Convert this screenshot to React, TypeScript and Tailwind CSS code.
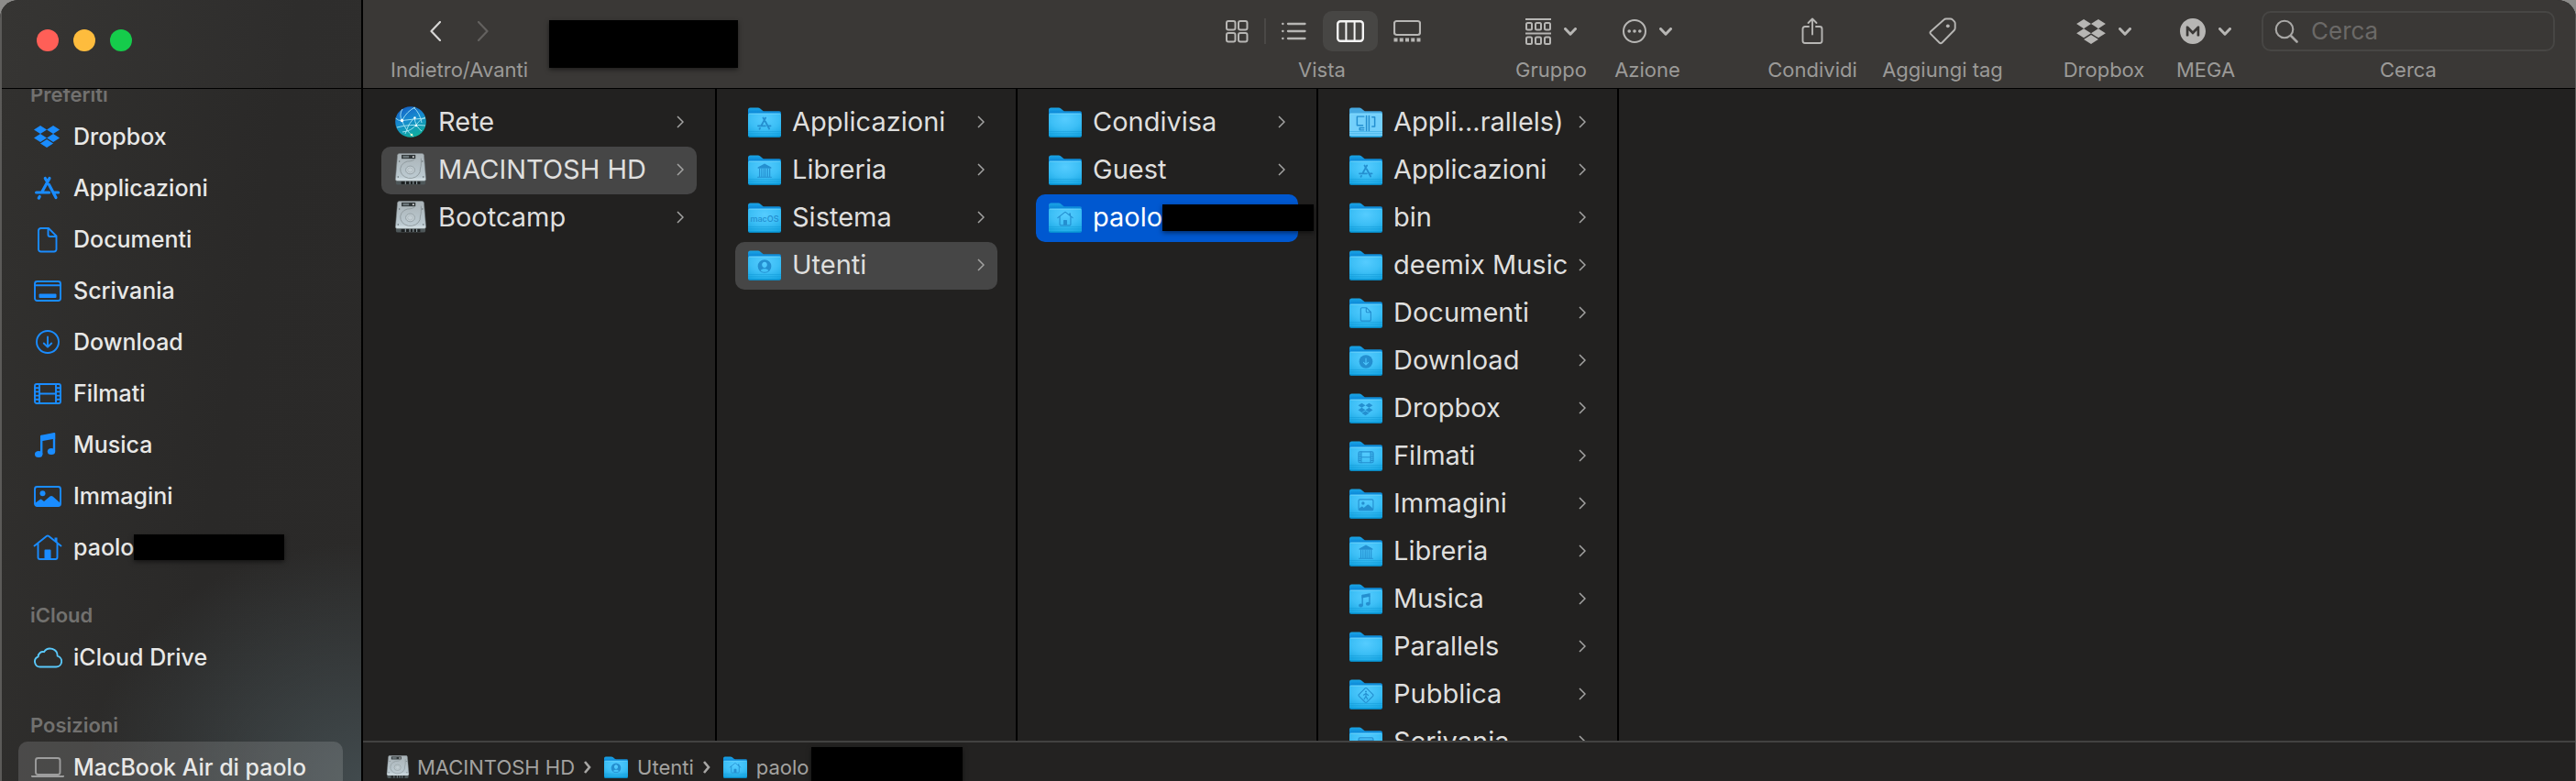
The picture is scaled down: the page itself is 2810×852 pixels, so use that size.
import { useState } from 'react';
import type { ReactNode } from 'react';
import clsx from 'clsx';
import { SiMega } from 'react-icons/si';

type GlyphName =
  | 'dropbox' | 'apps' | 'document' | 'desktop' | 'download' | 'film' | 'music' | 'image' | 'home'
  | 'library' | 'user' | 'public' | 'parallels' | 'macos';

type Entry = { name: string; icon: 'network' | 'disk' | 'folder'; glyph?: GlyphName; hidden?: boolean; light?: boolean };

const favorites: { name: string; glyph: GlyphName; hidden?: boolean }[] = [
  { name: 'Dropbox', glyph: 'dropbox' },
  { name: 'Applicazioni', glyph: 'apps' },
  { name: 'Documenti', glyph: 'document' },
  { name: 'Scrivania', glyph: 'desktop' },
  { name: 'Download', glyph: 'download' },
  { name: 'Filmati', glyph: 'film' },
  { name: 'Musica', glyph: 'music' },
  { name: 'Immagini', glyph: 'image' },
  { name: 'paolo', glyph: 'home', hidden: true },
];

const columns: { selected?: string; entries: Entry[] }[] = [
  {
    selected: 'MACINTOSH HD',
    entries: [
      { name: 'Rete', icon: 'network' },
      { name: 'MACINTOSH HD', icon: 'disk' },
      { name: 'Bootcamp', icon: 'disk' },
    ],
  },
  {
    selected: 'Utenti',
    entries: [
      { name: 'Applicazioni', icon: 'folder', glyph: 'apps' },
      { name: 'Libreria', icon: 'folder', glyph: 'library' },
      { name: 'Sistema', icon: 'folder', glyph: 'macos' },
      { name: 'Utenti', icon: 'folder', glyph: 'user' },
    ],
  },
  {
    selected: 'paolo',
    entries: [
      { name: 'Condivisa', icon: 'folder' },
      { name: 'Guest', icon: 'folder' },
      { name: 'paolo', icon: 'folder', glyph: 'home', hidden: true },
    ],
  },
  {
    entries: [
      { name: 'Appli...rallels)', icon: 'folder', glyph: 'parallels', light: true },
      { name: 'Applicazioni', icon: 'folder', glyph: 'apps' },
      { name: 'bin', icon: 'folder' },
      { name: 'deemix Music', icon: 'folder' },
      { name: 'Documenti', icon: 'folder', glyph: 'document' },
      { name: 'Download', icon: 'folder', glyph: 'download' },
      { name: 'Dropbox', icon: 'folder', glyph: 'dropbox' },
      { name: 'Filmati', icon: 'folder', glyph: 'film' },
      { name: 'Immagini', icon: 'folder', glyph: 'image' },
      { name: 'Libreria', icon: 'folder', glyph: 'library' },
      { name: 'Musica', icon: 'folder', glyph: 'music' },
      { name: 'Parallels', icon: 'folder' },
      { name: 'Pubblica', icon: 'folder', glyph: 'public' },
      { name: 'Scrivania', icon: 'folder', glyph: 'desktop' },
    ],
  },
];

const dropboxPath =
  'M6 1.8L0 5.63l6 3.82 6-3.82zM18 1.8l-6 3.83 6 3.82 6-3.82zM0 13.27l6 3.83 6-3.83-6-3.82zM18 9.45l-6 3.82 6 3.83 6-3.83zM6 18.37l6 3.82 6-3.82-6-3.82z';

// all glyphs live on a 30x30 grid and take the current colour
const glyphs: Record<GlyphName, ReactNode> = {
  dropbox: <path d={dropboxPath} transform="translate(0 1) scale(1.17)" fill="currentColor" stroke="none" />,
  apps: <path d="M17 4.5L9 19M12.3 4.5l1.2 2.2M16.5 11.5L24 25.5M2.6 20h14M22 20h4.6M6.2 24.5l-.9 1.6" strokeWidth="3.2" />,
  document: <path d="M7.5 3H16l8.5 8.5V26a2.5 2.5 0 0 1-2.5 2.5H7.5A2.5 2.5 0 0 1 5 26V5.500A2.5 2.5 0 0 1 7.5 3zM15.5 3.5V10a2 2 0 0 0 2 2H24" />,
  desktop: (
    <>
      <rect x="1" y="5" width="28" height="21" rx="2.5" />
      <path d="M1 9.2h28" />
      <rect x="5.5" y="18.5" width="19" height="4.5" rx="1" fill="currentColor" stroke="none" />
    </>
  ),
  download: (
    <>
      <circle cx="15" cy="15" r="12" />
      <path d="M15 9.5v11M10.8 16.5l4.2 4.2 4.2-4.2" />
    </>
  ),
  film: (
    <>
      <rect x="1" y="5" width="28" height="21" rx="2" />
      <path d="M6 5v21M24 5v21M6 15.5h18M1 9.2h5M1 13.4h5M1 17.6h5M1 21.8h5M24 9.2h5M24 13.4h5M24 17.6h5M24 21.8h5" />
    </>
  ),
  music: (
    <>
      <path d="M8.2 25V6M22 22V8" strokeWidth="2.4" />
      <path d="M7 6.2q0-1.2 1.2-1.5L22 2q1.3-.2 1.3 1v5.5L7 11.5z" fill="currentColor" stroke="none" />
      <ellipse cx="5.2" cy="25.5" rx="4.2" ry="3.5" fill="currentColor" stroke="none" />
      <ellipse cx="19" cy="22.5" rx="4.2" ry="3.5" fill="currentColor" stroke="none" />
    </>
  ),
  image: (
    <>
      <rect x="1" y="5" width="28" height="21" rx="2.5" />
      <circle cx="9.500" cy="12.3" r="3" fill="currentColor" stroke="none" />
      <path d="M1 23l5.5-4q1-.8 2 0l2.5 2 6.5-5.5q1.5-1.2 3 0L29 23v1q0 2-2 2H3q-2 0-2-2z" fill="currentColor" stroke="none" />
    </>
  ),
  home: (
    <>
      <path d="M.5 13.500L14 2.800q1-.8 2 0l13.5 10.7M4.500 11v15a2 2 0 0 0 2 2h17a2 2 0 0 0 2-2V11" />
      <path d="M11.5 28v-9.500q0-1 1-1h5q1 0 1 1V28zM22.5 4.500h3v6l-3-2.400z" fill="currentColor" stroke="none" />
    </>
  ),
  library: (
    <>
      <path d="M15 1l13 7v2H2V8z" fill="currentColor" stroke="none" />
      <path d="M5.5 11v14M9.5 11v14M13.5 11v14M17 11v14M21 11v14M25 11v14M2 27h26" />
    </>
  ),
  user: (
    <path
      fillRule="evenodd"
      stroke="none"
      fill="currentColor"
      d="M15 2a13 13 0 1 0 0 26 13 13 0 1 0 0-26zM15 6.500c3 0 5 2.500 5 5.500s-2 6-5 6-5-3-5-6 2-5.500 5-5.500zM7.5 23.500c1-2.500 4.500-3.500 7.500-3.500s6.500 1 7.500 3.500c-2 1.800-4.500 2.700-7.500 2.700s-5.500-.9-7.500-2.700z"
    />
  ),
  public: (
    <>
      <path d="M13.5 1.500q1.5-1.2 3 0l12 12q1.200 1.500 0 3l-12 12q-1.500 1.200-3 0l-12-12q-1.200-1.500 0-3z" />
      <circle cx="15" cy="8" r="1.800" fill="currentColor" stroke="none" />
      <path d="M15 11v6l3 5.500M15 17l-3.500 5.500M10.500 14.500l4.500-3 4.500 3.500" />
    </>
  ),
  parallels: <path d="M11 2H-2v17H9M11 24H3v4h8M16 1v28M21 1v28M27 3h5v18h-5" strokeWidth="2.6" />,
  macos: (
    <text x="15" y="21" textAnchor="middle" fontSize="16" fontWeight="500" fill="currentColor" stroke="none">
      macOS
    </text>
  ),
};

function Glyph({ name, className }: { name: GlyphName; className?: string }) {
  return (
    <svg viewBox="0 0 30 30" width="30" height="30" fill="none" stroke="currentColor" strokeWidth="1.9"
      strokeLinecap="round" strokeLinejoin="round" className={clsx('shrink-0 overflow-visible', className)}>
      {glyphs[name]}
    </svg>
  );
}

function FolderIcon({ glyph, light, className }: { glyph?: GlyphName; light?: boolean; className?: string }) {
  return (
    <svg viewBox="0 0 36 33" className={clsx('shrink-0', className)}>
      <defs>
        <linearGradient id="folder-back" x1="0" y1="0" x2="0" y2="1">
          <stop offset="0" stopColor="#1aa6e6" />
          <stop offset=".25" stopColor="#0a84d6" />
        </linearGradient>
        <radialGradient id="folder-front" cx=".5" cy=".25" r=".85">
          <stop offset="0" stopColor="#55ccff" />
          <stop offset=".5" stopColor="#3dbff6" />
          <stop offset="1" stopColor="#15a5e2" />
        </radialGradient>
      </defs>
      <path d="M0 3q0-2.5 2.5-2.5h8.3q1.4 0 2.5.9l2.4 2q1 .9 2.4.9H34q2 0 2 2V26H0z" fill={light ? '#45a8e0' : 'url(#folder-back)'} />
      <path d="M0 8q0-1.500 1.500-1.500h33Q36 6.500 36 8v22.500q0 2-2 2H2q-2 0-2-2z" fill={light ? '#74d0fb' : 'url(#folder-front)'} />
      <path d="M1 7.2h34" stroke="#8be0ff" strokeWidth=".8" opacity=".7" />
      <path d="M0 26.500h36M0 28.800h36" stroke="#0d93d2" strokeWidth=".7" opacity=".55" />
      <path d="M.5 31.500q.7.600 1.500.6h32q.8 0 1.500-.6" fill="none" stroke="#0590cf" strokeWidth="1.4" />
      {glyph && (
        <svg x="9.500" y="9" width="17" height="17" viewBox="0 0 30 30" fill="none" stroke="currentColor" strokeWidth="2"
          strokeLinecap="round" strokeLinejoin="round" overflow="visible" className="text-[#248fd0]">
          {glyph === 'download' ? (
            <>
              <circle cx="15" cy="15" r="13" fill="currentColor" stroke="none" />
              <path d="M15 9v12M10.500 16.500L15 21l4.500-4.500" stroke="#4cc6fb" />
            </>
          ) : (
            glyphs[glyph]
          )}
        </svg>
      )}
    </svg>
  );
}

function DiskIcon({ className }: { className?: string }) {
  return (
    <svg viewBox="-1 0 38 38" className={clsx('shrink-0', className)}>
      <defs>
        <linearGradient id="disk-body" x1="0" y1="0" x2="0" y2="1">
          <stop offset="0" stopColor="#a9b2b6" />
          <stop offset=".85" stopColor="#bccad1" />
          <stop offset="1" stopColor="#dbe6ea" />
        </linearGradient>
      </defs>
      <path d="M1 30h34v4.500q0 2-2 2H3q-2 0-2-2z" fill="#4e5759" />
      <path d="M7 32.500h22v3.500H7z" fill="#1d2122" />
      <path d="M12 32v4M17 32v4M21 32v4M25 32v4" stroke="#8b979b" strokeWidth="1.2" />
      <path d="M5 .5h26q2 0 2.200 2L35.500 30q0 2-2 2h-31q-2 0-2-2L2.800 2.500Q3 .5 5 .5z" fill="url(#disk-body)" stroke="#7d878b" strokeWidth=".6" />
      <path d="M7.500 2h16v4.500h-16z" fill="#303638" />
      <path d="M9 3h7v2.500H9z" fill="#6d777b" />
      <circle cx="21" cy="4.300" r="1" fill="#fff" />
      <path d="M30 6v6q0 3-1 6a11.500 10 0 1 1-15-8.500Q21 9.500 23 6.500" fill="none" stroke="#8a9498" strokeWidth=".9" />
      <ellipse cx="17.500" cy="19.500" rx="5.200" ry="4.600" fill="#c3ced3" stroke="#8e999d" strokeWidth=".9" />
      <ellipse cx="17.500" cy="19.500" rx="3" ry="2.600" fill="none" stroke="#a3aeb2" strokeWidth=".6" />
      <g fill="#5b6568">
        <circle cx="5" cy="9.500" r=".7" />
        <circle cx="31.500" cy="9.500" r=".7" />
        <circle cx="3.500" cy="27.500" r=".8" />
        <circle cx="32.500" cy="27.500" r=".8" />
      </g>
    </svg>
  );
}

function NetworkIcon() {
  return (
    <svg viewBox="0 0 36 36" className="size-9 shrink-0">
      <defs>
        <linearGradient id="globe" x1=".2" y1="0" x2=".6" y2="1">
          <stop offset="0" stopColor="#1560c4" />
          <stop offset=".45" stopColor="#168bd0" />
          <stop offset="1" stopColor="#0fae9c" />
        </linearGradient>
      </defs>
      <circle cx="18" cy="18" r="16.8" fill="url(#globe)" />
      <g fill="none" stroke="#a8e6f5" strokeWidth=".9">
        <path d="M9 4Q5 10 8.500 16.500 12 27 21 34M8.500 16.500Q20 15 34 14M8.500 16.500Q14 6 23 2M1.500 14q3 3 7 2.500M21 2Q28 8 30 19M22 13Q15 20 12 31M22 13q1 10 8 15M3 24q14-4 31-2M9 29q10-1 15-8t10-8" />
      </g>
      <circle cx="8.500" cy="16.500" r="1.700" fill="#fff" />
      <circle cx="22.500" cy="13.500" r="1.200" fill="#fff" />
      <circle cx="24" cy="22" r="1.200" fill="#fff" />
      <circle cx="19" cy="32" r="1.300" fill="#e9fdd0" />
    </svg>
  );
}

function Redacted({ className }: { className: string }) {
  return <span className={clsx('shrink-0 bg-black shadow-[0_2px_5px_rgba(0,0,0,0.5)]', className)} />;
}

function RowChevron() {
  return (
    <svg viewBox="0 0 8 14" className="ml-auto h-3.5 w-2 shrink-0" fill="none" stroke="#a3a3a2" strokeWidth="1.5">
      <path d="M1 1l6 6-6 6" />
    </svg>
  );
}

function MenuChevron() {
  return (
    <svg viewBox="0 0 14 9" className="h-[9px] w-3.5 shrink-0" fill="none" stroke="currentColor" strokeWidth="3" strokeLinecap="round" strokeLinejoin="round">
      <path d="M1.500 1.500L7 7.200l5.500-5.700" />
    </svg>
  );
}

function Tool({ label, menu, className, children }: { label: string; menu?: boolean; className: string; children: ReactNode }) {
  return (
    <button className={clsx('flex shrink-0 flex-col items-center gap-2 text-[#b7b6b4]', className)}>
      <span className="flex h-11 items-center gap-3.5">
        {children}
        {menu && <MenuChevron />}
      </span>
      <span className="text-[22px] leading-6 whitespace-nowrap text-[#9b9a98]">{label}</span>
    </button>
  );
}

const views: { id: string; label: string; icon: ReactNode }[] = [
  {
    id: 'icons',
    label: 'Icone',
    icon: (
      <g>
        <rect x="4" y="4" width="9.500" height="9.500" rx="2" />
        <rect x="17" y="4" width="9.500" height="9.500" rx="2" />
        <rect x="4" y="17" width="9.500" height="9.500" rx="2" />
        <rect x="17" y="17" width="9.500" height="9.500" rx="2" />
      </g>
    ),
  },
  {
    id: 'list',
    label: 'Elenco',
    icon: <path d="M9 7h18.500M9 15h18.500M9 23h18.500M3.200 7h.3M3.200 15h.3M3.200 23h.3" strokeWidth="2.3" />,
  },
  {
    id: 'columns',
    label: 'Colonne',
    icon: (
      <g>
        <rect x="1.200" y="4.200" width="27.600" height="21.600" rx="3" strokeWidth="2.4" />
        <path d="M10.400 4v22M19.600 4v22" />
      </g>
    ),
  },
  {
    id: 'gallery',
    label: 'Galleria',
    icon: (
      <g>
        <rect x="1" y="4" width="28" height="15" rx="2.500" strokeWidth="2.2" />
        <path d="M.5 24.500h29" strokeWidth="4" strokeDasharray="4 2.250" strokeLinecap="butt" />
      </g>
    ),
  },
];

function Toolbar() {
  const [view, setView] = useState('columns');
  const [query, setQuery] = useState('');

  return (
    <header className="flex h-[97px] shrink-0 items-start gap-[30px] border-b border-black bg-[#3a3836] pt-3 pr-[22px] pl-[31px]">
      <div className="flex w-[148px] shrink-0 flex-col items-center gap-2">
        <div className="flex h-11 items-center gap-10">
          <button aria-label="Indietro" className="text-[#d6d5d4]">
            <svg viewBox="0 0 12 22" className="h-[22px] w-3" fill="none" stroke="currentColor" strokeWidth="2.2" strokeLinecap="round" strokeLinejoin="round">
              <path d="M11 1L1.500 11 11 21" />
            </svg>
          </button>
          <button aria-label="Avanti" className="text-[#63615f]">
            <svg viewBox="0 0 12 22" className="h-[22px] w-3" fill="none" stroke="currentColor" strokeWidth="2.2" strokeLinecap="round" strokeLinejoin="round">
              <path d="M1 1l9.500 10L1 21" />
            </svg>
          </button>
        </div>
        <span className="text-[22px] leading-6 whitespace-nowrap text-[#9b9a98]">Indietro/Avanti</span>
      </div>
      <Redacted className="-ml-1.5 mt-2.5 mr-auto h-[52px] w-[206px]" />

      <div className="mr-[58px] flex shrink-0 flex-col items-center gap-2">
        <div className="flex items-center gap-0.5">
          {views.map((v) => (
            <button key={v.id} aria-label={v.label} aria-pressed={view === v.id} onClick={() => setView(v.id)}
              className={clsx('relative flex h-11 w-15 items-center justify-center rounded-[10px]', view === v.id ? 'bg-[#474644] text-[#f4f4f4]' : 'text-[#b7b6b4]')}>
              <svg viewBox="0 0 30 30" className="size-[30px]" fill="none" stroke="currentColor" strokeWidth="2" strokeLinecap="round" strokeLinejoin="round">
                {v.icon}
              </svg>
              {v.id === 'icons' && <span className="absolute top-2 -right-0.5 h-7 w-0.5 bg-[#4a4846]" />}
            </button>
          ))}
        </div>
        <span className="text-[22px] leading-6 text-[#9b9a98]">Vista</span>
      </div>

      <Tool label="Gruppo" menu className="w-[78px]">
        <svg viewBox="0 0 28 30" className="h-[30px] w-7" fill="none" stroke="currentColor" strokeWidth="2">
          <path d="M0 2h28M0 17.500h28" />
          <g>
            <rect x="1" y="6" width="6" height="7.500" rx="1.500" />
            <rect x="11" y="6" width="6" height="7.500" rx="1.500" />
            <rect x="21" y="6" width="6" height="7.500" rx="1.500" />
            <rect x="1" y="21.500" width="6" height="7.500" rx="1.500" />
            <rect x="11" y="21.500" width="6" height="7.500" rx="1.500" />
            <rect x="21" y="21.500" width="6" height="7.500" rx="1.500" />
          </g>
        </svg>
      </Tool>
      <Tool label="Azione" menu className="mr-[66px] w-[72px]">
        <svg viewBox="0 0 26 26" className="size-[26px]" fill="none" stroke="currentColor" strokeWidth="2">
          <circle cx="13" cy="13" r="12" />
          <path d="M7.200 13h.01M13 13h.01M18.800 13h.01" strokeWidth="3.6" strokeLinecap="round" />
        </svg>
      </Tool>
      <Tool label="Condividi" className="w-24">
        <svg viewBox="0 0 24 30" className="h-[30px] w-6" fill="none" stroke="currentColor" strokeWidth="1.9" strokeLinecap="round" strokeLinejoin="round">
          <path d="M8 10H4a2.500 2.500 0 0 0-2.500 2.500v13A2.500 2.500 0 0 0 4 28h16a2.500 2.500 0 0 0 2.500-2.500v-13A2.500 2.500 0 0 0 20 10h-4M12 18.500V1.500M7.500 6L12 1.500 16.500 6" />
        </svg>
      </Tool>
      <Tool label="Aggiungi tag" className="mr-8 w-32">
        <svg viewBox="0 0 30 30" className="size-[30px]" fill="none" stroke="currentColor" strokeWidth="1.9" strokeLinejoin="round">
          <path d="M16.500 2.500q1-1 2.500-1h4.500q1.500 0 2.300.8l2 2q.9.900.9 2.200V11.500q0 1.500-1 2.500L14.500 27.500q-1.500 1.500-3 0l-9.300-9.300q-1.400-1.500 0-3z" />
          <circle cx="20.800" cy="9.300" r="1.900" fill="currentColor" stroke="none" />
        </svg>
      </Tool>
      <Tool label="Dropbox" menu className="w-25">
        <svg viewBox="0 1.8 24 20.4" className="h-[27px] w-8" fill="currentColor">
          <path d={dropboxPath} />
        </svg>
      </Tool>
      <Tool label="MEGA" menu className="w-[62px]">
        <SiMega className="size-7" />
      </Tool>

      <div className="flex w-80 shrink-0 flex-col items-center gap-2">
        <div className="flex h-11 w-full items-center gap-3.5 rounded-[10px] border-2 border-[#474644] px-3">
          <svg viewBox="0 0 26 26" className="size-[26px] shrink-0" fill="none" stroke="#a9a8a6" strokeWidth="2.1" strokeLinecap="round">
            <circle cx="11" cy="11" r="9.300" />
            <path d="M18 18l6.500 6.500" strokeWidth="2.6" />
          </svg>
          <input id="search" type="text" placeholder="Cerca" value={query} onChange={(e) => setQuery(e.target.value)}
            className="min-w-0 flex-1 bg-transparent text-[26px] leading-8 text-[#dfdfde] outline-none placeholder:text-[#6b6967]" />
        </div>
        <label htmlFor="search" className="text-[22px] leading-6 text-[#9b9a98]">Cerca</label>
      </div>
    </header>
  );
}

function SidebarHeading({ children }: { children: ReactNode }) {
  return <h2 className="flex h-16 items-end pb-1 pl-[31px] text-[22px] leading-7 font-semibold text-[#72716f]">{children}</h2>;
}

function SidebarItem({ label, icon, active, hidden }: { label: string; icon: ReactNode; active?: boolean; hidden?: boolean }) {
  return (
    <li className="pr-5 pl-[18px]">
      <button className={clsx('flex h-14 w-full items-center rounded-[10px] pl-[17px] text-left', active && 'bg-white/14')}>
        <span className="flex w-[30px] shrink-0 justify-center">{icon}</span>
        <span className="ml-[13px] text-[25px] leading-8 font-medium whitespace-nowrap text-[#e8e8e7]">{label}</span>
        {hidden && <Redacted className="h-7 w-[164px]" />}
      </button>
    </li>
  );
}

function Sidebar() {
  return (
    <aside className="flex w-[396px] shrink-0 flex-col border-r-2 border-l-2 border-r-black border-l-[#5b5a58] bg-[radial-gradient(ellipse_300px_260px_at_100%_100%,#414a4d,transparent),linear-gradient(100deg,#32312f,#2a2928_60%,#2b2a29)]">
      <div className="flex h-[97px] shrink-0 items-center gap-4 border-b border-black bg-white/2 pb-2 pl-[38px]">
        <button aria-label="Chiudi" className="size-6 rounded-full bg-[#ff5f57]" />
        <button aria-label="Riduci" className="size-6 rounded-full bg-[#febc3d]" />
        <button aria-label="Ingrandisci" className="size-6 rounded-full bg-[#15cc4b]" />
      </div>
      <nav className="min-h-0 flex-1 overflow-hidden">
        <div className="-mt-10">
          <SidebarHeading>Preferiti</SidebarHeading>
          <ul>
            {favorites.map((f) => (
              <SidebarItem key={f.name} label={f.name} hidden={f.hidden} icon={<Glyph name={f.glyph} className="text-[#1a8cff]" />} />
            ))}
          </ul>
          <SidebarHeading>iCloud</SidebarHeading>
          <ul>
            <SidebarItem
              label="iCloud Drive"
              icon={
                <svg viewBox="0 0 32 24" className="h-6 w-8 shrink-0" fill="none" stroke="#5ac8fa" strokeWidth="1.9" strokeLinejoin="round">
                  <path d="M8 22.500h17a6 6 0 0 0 1.700-11.800A8 8 0 0 0 12 6.200 5 5 0 0 0 5.700 11.300 5.800 5.800 0 0 0 8 22.500z" />
                </svg>
              }
            />
          </ul>
          <SidebarHeading>Posizioni</SidebarHeading>
          <ul>
            <SidebarItem
              active
              label="MacBook Air di paolo"
              icon={
                <svg viewBox="0 0 36 24" className="h-6 w-9 shrink-0" fill="none" stroke="#9d9d9d" strokeWidth="1.9">
                  <rect x="5" y="2" width="26.500" height="18" rx="2.500" />
                  <path d="M0 21h36v.5q0 1.500-1.500 1.500h-33Q0 23 0 21.500z" fill="#9d9d9d" stroke="none" />
                </svg>
              }
            />
          </ul>
        </div>
      </nav>
    </aside>
  );
}

function EntryIcon({ entry }: { entry: Entry }) {
  if (entry.icon === 'network') return <NetworkIcon />;
  if (entry.icon === 'disk') return <DiskIcon className="size-9" />;
  return <FolderIcon glyph={entry.glyph} light={entry.light} className="h-[33px] w-9" />;
}

function Column({ entries, selected, wide, focused }: { entries: Entry[]; selected?: string; wide?: boolean; focused?: boolean }) {
  return (
    <ul className={clsx('shrink-0 border-r-2 border-black px-5 pt-[11px]', wide ? 'w-[386px]' : 'w-[328px]')}>
      {entries.map((entry) => (
        <li key={entry.name}>
          <button
            className={clsx(
              'flex h-13 w-full items-center rounded-[10px] px-3.5 pb-0.5 text-left text-[#dfdfde]',
              selected === entry.name && (focused ? 'bg-[#0058d0] text-white' : 'bg-[#464646]'),
            )}>
            <EntryIcon entry={entry} />
            <span className="ml-3 text-[29px] leading-9 whitespace-nowrap">{entry.name}</span>
            {entry.hidden ? <Redacted className="h-[29px] w-[165px]" /> : <RowChevron />}
          </button>
        </li>
      ))}
    </ul>
  );
}

function PathChevron() {
  return (
    <svg viewBox="0 0 8 14" className="mx-2.5 h-3.5 w-2 shrink-0" fill="none" stroke="#a8a7a5" strokeWidth="2.6">
      <path d="M1 1l5 6-5 6" />
    </svg>
  );
}

function PathBar() {
  return (
    <footer className="flex h-11 shrink-0 items-center border-t-2 border-[#424241] bg-[#232221] pt-3 pl-[25px] text-[22px] leading-7 text-[#a3a2a0]">
      <a href="#macintosh-hd" className="flex items-center gap-2">
        <DiskIcon className="size-[26px]" />
        MACINTOSH HD
      </a>
      <PathChevron />
      <a href="#utenti" className="ml-1 flex items-center gap-2.5">
        <FolderIcon glyph="user" className="h-6 w-[26px]" />
        Utenti
      </a>
      <PathChevron />
      <a href="#paolo" className="ml-1 flex items-center gap-2.5">
        <FolderIcon glyph="home" className="h-6 w-[26px]" />
        paolo
      </a>
      <Redacted className="ml-0.5 h-11 w-[165px]" />
    </footer>
  );
}

export default function App() {
  return (
    <div className="h-screen bg-[#8d8c8a]">
      <div className="flex h-full overflow-hidden rounded-t-[20px] bg-[#222120] font-['Inter','Liberation_Sans',sans-serif]">
        <Sidebar />
        <main className="flex min-w-0 flex-1 flex-col overflow-hidden border-r border-[#5b5a58]">
          <Toolbar />
          <div className="flex min-h-0 flex-1 overflow-hidden">
            {columns.map((c, i) => (
              <Column key={i} entries={c.entries} selected={c.selected} wide={i === 0} focused={i === 2} />
            ))}
          </div>
          <PathBar />
        </main>
      </div>
    </div>
  );
}
